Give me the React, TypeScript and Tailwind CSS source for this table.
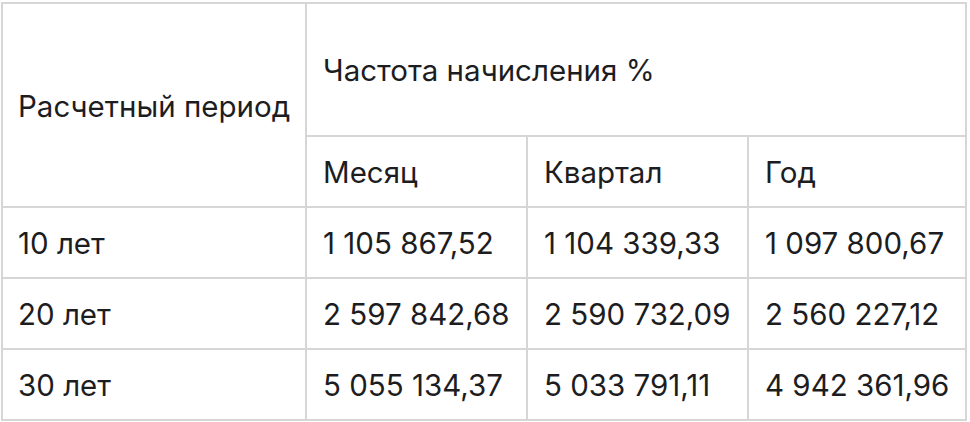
import React from "react";

const rows = [
  ["10 лет", "1 105 867,52", "1 104 339,33", "1 097 800,67"],
  ["20 лет", "2 597 842,68", "2 590 732,09", "2 560 227,12"],
  ["30 лет", "5 055 134,37", "5 033 791,11", "4 942 361,96"],
];

export default function App() {
  return (
    <div className="w-[970px] h-[422px] bg-white pt-[2px] pl-[1px]" style={{ fontFamily: "Inter, 'Noto Sans', sans-serif" }}>
      <div className="grid w-[966px] grid-cols-[302px_219px_219px_216px] grid-rows-[131px_69px_69px_69px_69px] gap-[2px] bg-[#d6d6d6] p-[2px] text-[29.5px] text-[#1d1d1f] leading-none">
        <div className="row-span-2 flex items-center bg-white pl-[15px] pt-[3px]">Расчетный период</div>
        <div className="col-span-3 flex items-center bg-white pl-[16px] pt-[3px]">Частота начисления %</div>
        <div className="flex items-center bg-white pl-[16px] pt-[3px]">Месяц</div>
        <div className="flex items-center bg-white pl-[16px] pt-[3px]">Квартал</div>
        <div className="flex items-center bg-white pl-[16px] pt-[3px]">Год</div>
        {rows.map((r) =>
          r.map((c, i) => (
            <div key={r[0] + i} className={`flex items-center bg-white pt-[3px] ${i === 0 ? "pl-[15px]" : "pl-[16px]"}`}>
              {c}
            </div>
          ))
        )}
      </div>
    </div>
  );
}
